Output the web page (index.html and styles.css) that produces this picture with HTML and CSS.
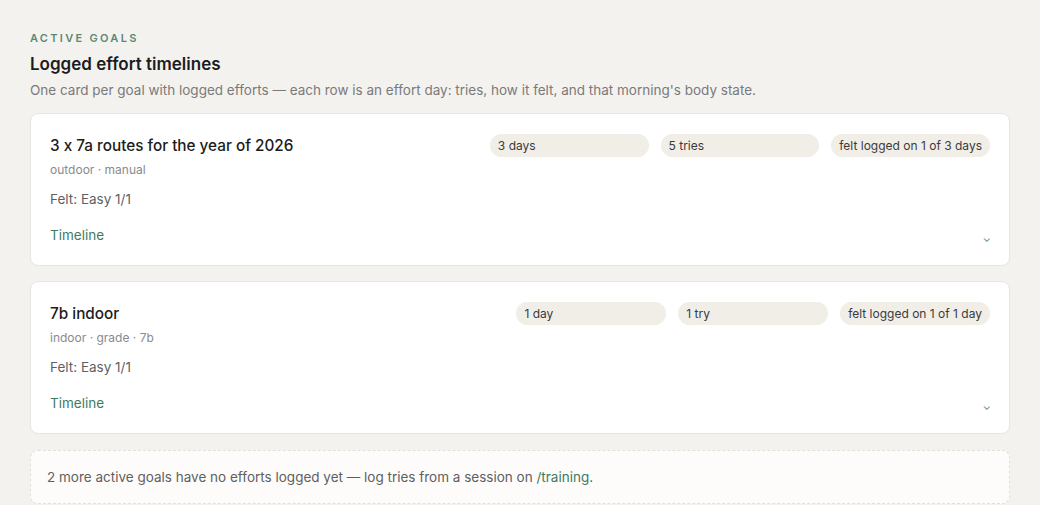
FILE: index.html
```html
<!DOCTYPE html>
<html lang="en">
<head>
    <meta charset="UTF-8">
    <meta name="viewport" content="width=device-width, initial-scale=1.0">
    <title>Active goals</title>
    <link rel="stylesheet" href="styles.css">
</head>
<body>
    <section class="goals">
        <p class="eyebrow">Active goals</p>
        <h2 class="title">Logged effort timelines</h2>
        <p class="lead">One card per goal with logged efforts — each row is an effort day: tries, how it felt, and that morning's body state.</p>

        <div class="card">
            <div class="card-head">
                <div class="card-name">
                    <h3>3 x 7a routes for the year of 2026</h3>
                    <p class="meta">outdoor · manual</p>
                </div>
                <div class="chips">
                    <span class="chip">3 days</span>
                    <span class="chip">5 tries</span>
                    <span class="chip">felt logged on 1 of 3 days</span>
                </div>
            </div>
            <p class="felt">Felt: Easy 1/1</p>
            <div class="timeline">
                <span class="timeline-label">Timeline</span>
                <span class="chevron">⌄</span>
            </div>
        </div>

        <div class="card">
            <div class="card-head">
                <div class="card-name">
                    <h3>7b indoor</h3>
                    <p class="meta">indoor · grade · 7b</p>
                </div>
                <div class="chips">
                    <span class="chip">1 day</span>
                    <span class="chip">1 try</span>
                    <span class="chip">felt logged on 1 of 1 day</span>
                </div>
            </div>
            <p class="felt">Felt: Easy 1/1</p>
            <div class="timeline">
                <span class="timeline-label">Timeline</span>
                <span class="chevron">⌄</span>
            </div>
        </div>

        <div class="empty-note">
            2 more active goals have no efforts logged yet — log tries from a session on <a href="#">/training</a>.
        </div>
    </section>
</body>
</html>
```

FILE: styles.css
```css
body {
    margin: 0;
    padding: 0;
    background: #f4f2ee;
    color: #1f1f22;
    font-family: 'Inter', 'Liberation Sans', sans-serif;
    font-feature-settings: "calt" 0;
}

.goals {
    padding: 30px 30px 0;
}

/* Section header */
.eyebrow {
    margin: 0;
    font-size: 11px;
    line-height: 16px;
    font-weight: 600;
    letter-spacing: 2.3px;
    text-transform: uppercase;
    color: #5a8a74;
}

.title {
    margin: 6px 0 0;
    font-size: 17px;
    line-height: 24px;
    font-weight: 600;
    color: #1c1c20;
}

.lead {
    margin: 5px 0 0;
    font-size: 13.5px;
    line-height: 18px;
    color: #7a7a7c;
}

/* Goal cards */
.card {
    margin-top: 14px;
    padding: 20px 19px 20px;
    background: #fff;
    border: 1px solid #e8e5de;
    border-radius: 8px;
}

.card + .card {
    margin-top: 15px;
}

.card-head {
    display: flex;
    justify-content: space-between;
    align-items: flex-start;
}

.card-name h3 {
    margin: 0;
    font-size: 15.3px;
    line-height: 24px;
    font-weight: 500;
    color: #1c1c20;
}

.meta {
    margin: 4px 0 0;
    font-size: 12px;
    line-height: 16px;
    color: #8a8a8c;
}

.chips {
    display: grid;
    grid-template-columns: repeat(3, 1fr);
    gap: 12px;
}

.chip {
    padding: 3px 8px;
    font-size: 12px;
    line-height: 17px;
    color: #3a3a3e;
    background: #f1eee8;
    border-radius: 12px;
    white-space: nowrap;
}

.felt {
    margin: 12px 0 0;
    font-size: 13.5px;
    line-height: 18px;
    color: #5f5f63;
}

.timeline {
    display: flex;
    justify-content: space-between;
    align-items: center;
    margin-top: 17px;
}

.timeline-label {
    font-size: 13.5px;
    line-height: 20px;
    color: #3f7a62;
}

.chevron {
    font-size: 11px;
    color: #7d7d80;
    margin-top: 6px;
    margin-right: -1px;
}

/* Empty state */
.empty-note {
    margin-top: 16px;
    padding: 17px 16px;
    background: #fdfcfa;
    border: 1px dashed #e4e0d8;
    border-radius: 8px;
    font-size: 13.5px;
    line-height: 18px;
    color: #5f5f63;
}

.empty-note a {
    color: #3f7a62;
    text-decoration: none;
}
```
